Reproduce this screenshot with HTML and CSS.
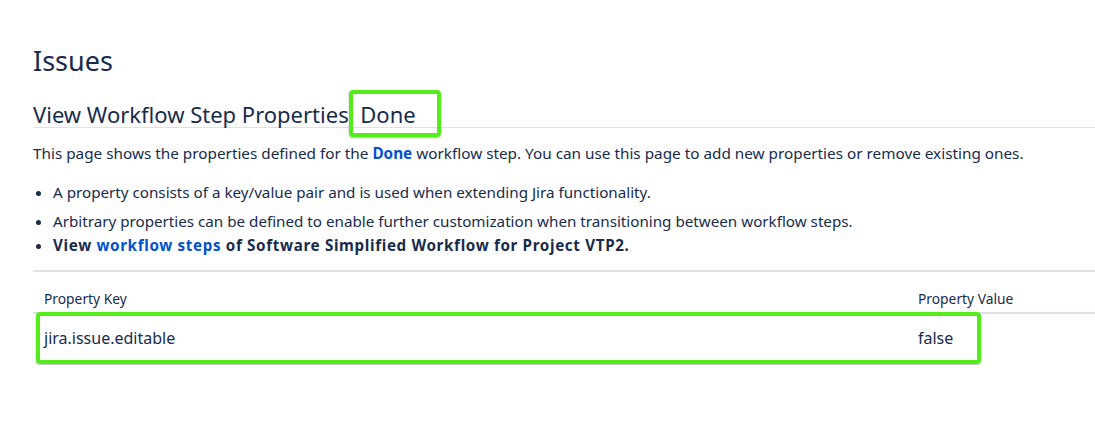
FILE: index.html
```html
<!DOCTYPE html>
<html lang="en">
<head>
    <meta charset="UTF-8">
    <title>View Workflow Step Properties</title>
    <link rel="stylesheet" href="styles.css">
</head>
<body>
    <div class="page">
        <h1>Issues</h1>

        <h2 class="step-title">View Workflow Step Properties: Done</h2>

        <p class="intro">This page shows the properties defined for the <b class="link">Done</b> workflow step. You can use this page to add new properties or remove existing ones.</p>

        <ul class="notes">
            <li>A property consists of a key/value pair and is used when extending Jira functionality.</li>
            <li>Arbitrary properties can be defined to enable further customization when transitioning between workflow steps.</li>
            <li class="strong">View <a class="link">workflow steps</a> of Software Simplified Workflow for Project VTP2.</li>
        </ul>

        <table class="props">
            <thead>
                <tr>
                    <th class="col-key">Property Key</th>
                    <th class="col-value">Property Value</th>
                </tr>
            </thead>
            <tbody>
                <tr>
                    <td class="col-key">jira.issue.editable</td>
                    <td class="col-value">false</td>
                </tr>
            </tbody>
        </table>

        <!-- highlight boxes drawn over the screenshot -->
        <div class="mark step-mark"></div>
        <div class="mark row-mark"></div>
    </div>
</body>
</html>
```

FILE: styles.css
```css
body {
    margin: 0;
    font-family: "Noto Sans", "Open Sans", sans-serif;
    color: #172b4d;
    background: #fff;
}
.page {
    position: relative;
    padding: 41px 0 0 33px;
}
h1 {
    font-size: 27px;
    font-weight: 400;
    margin: 0 0 21px 0;
    line-height: 40px;
}
.step-title {
    font-size: 22px;
    font-weight: 400;
    margin: 0;
    line-height: 25px;
    border-bottom: 1px solid #dfe1e6;
}
.intro {
    font-size: 15.3px;
    margin: 13px 0 0 0;
    line-height: 24px;
}
.link {
    color: #0052cc;
    font-weight: 700;
    text-decoration: none;
}
.notes {
    margin: 15px 0 0 0;
    padding: 0 0 0 20px;
    font-size: 15.2px;
    line-height: 24px;
    border-bottom: 2px solid #dfe1e6;
    padding-bottom: 13px;
}
.notes li {
    margin-top: 5px;
}
.notes li:first-child {
    margin-top: 0;
}
.notes li + li.strong {
    margin-top: 0;
}
.notes .strong {
    font-weight: 700;
    letter-spacing: 0.65px;
}
.props {
    width: 100%;
    border-collapse: collapse;
    margin-top: 12px;
}
.props th {
    font-size: 13.8px;
    font-weight: 400;
    text-align: left;
    padding: 5px 11px 4px 11px;
    border-bottom: 2px solid #dfe1e6;
}
.props td {
    font-size: 16px;
    padding: 13px 11px 16px 11px;
}
.props .col-value {
    width: 166px;
}
.mark {
    position: absolute;
    border: 4px solid #55ec1c;
    border-radius: 4px;
    box-shadow: 0 1px 2px rgba(0, 0, 0, 0.3);
}
.step-mark {
    left: 349px;
    top: 90px;
    width: 84px;
    height: 39px;
}
.row-mark {
    left: 36px;
    top: 312px;
    width: 937px;
    height: 44px;
}
```
